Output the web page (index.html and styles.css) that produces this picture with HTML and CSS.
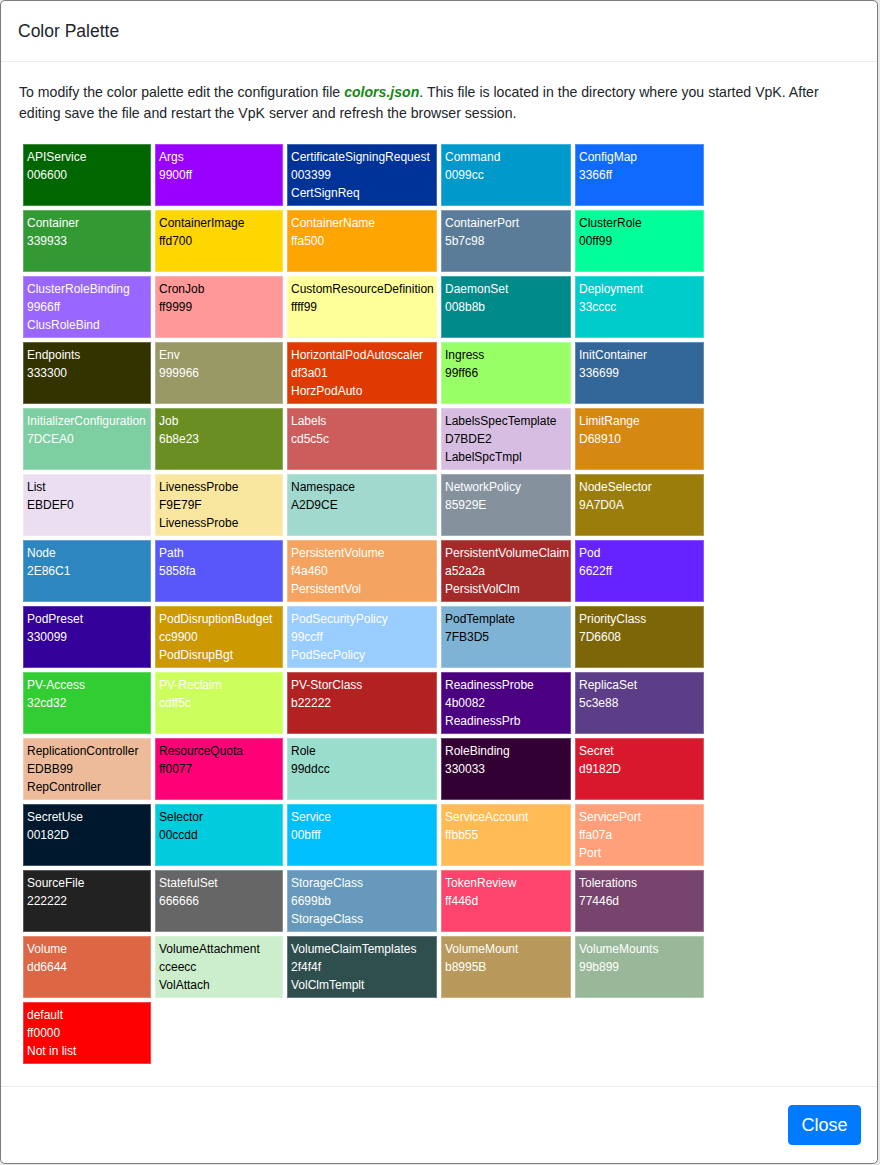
FILE: index.html
```html
<!DOCTYPE html>
<html lang="en">
<head>
<meta charset="utf-8">
<title>Color Palette</title>
<link rel="stylesheet" href="styles.css">
</head>
<body>
<div class="modal">
  <div class="modal-header">
    <h5 class="modal-title">Color Palette</h5>
  </div>
  <div class="modal-body">
    <p class="intro">To modify the color palette edit the configuration file <b class="file">colors.json</b>. This file is located in the directory where you started VpK. After editing save the file and restart the VpK server and refresh the browser session.</p>
    <div class="palette">
      <div class="cell light" style="background:#006600">APIService<br>006600</div>
      <div class="cell light" style="background:#9900ff">Args<br>9900ff</div>
      <div class="cell light" style="background:#003399">CertificateSigningRequest<br>003399<br>CertSignReq</div>
      <div class="cell light" style="background:#0099cc">Command<br>0099cc</div>
      <div class="cell light" style="background:#0f6bff">ConfigMap<br>3366ff</div>

      <div class="cell light" style="background:#339933">Container<br>339933</div>
      <div class="cell dark" style="background:#ffd700">ContainerImage<br>ffd700</div>
      <div class="cell light" style="background:#ffa500">ContainerName<br>ffa500</div>
      <div class="cell light" style="background:#5b7c98">ContainerPort<br>5b7c98</div>
      <div class="cell dark" style="background:#00ff99">ClusterRole<br>00ff99</div>

      <div class="cell light" style="background:#9966ff">ClusterRoleBinding<br>9966ff<br>ClusRoleBind</div>
      <div class="cell dark" style="background:#ff9999">CronJob<br>ff9999</div>
      <div class="cell dark" style="background:#ffff99">CustomResourceDefinition<br>ffff99</div>
      <div class="cell light" style="background:#008b8b">DaemonSet<br>008b8b</div>
      <div class="cell light" style="background:#00cccc">Deployment<br>33cccc</div>

      <div class="cell light" style="background:#333300">Endpoints<br>333300</div>
      <div class="cell light" style="background:#999966">Env<br>999966</div>
      <div class="cell light" style="background:#df3a01">HorizontalPodAutoscaler<br>df3a01<br>HorzPodAuto</div>
      <div class="cell dark" style="background:#99ff66">Ingress<br>99ff66</div>
      <div class="cell light" style="background:#336699">InitContainer<br>336699</div>

      <div class="cell light" style="background:#7dcea0">InitializerConfiguration<br>7DCEA0</div>
      <div class="cell light" style="background:#6b8e23">Job<br>6b8e23</div>
      <div class="cell light" style="background:#cd5c5c">Labels<br>cd5c5c</div>
      <div class="cell dark" style="background:#d7bde2">LabelsSpecTemplate<br>D7BDE2<br>LabelSpcTmpl</div>
      <div class="cell light" style="background:#d68910">LimitRange<br>D68910</div>

      <div class="cell dark" style="background:#ebdef0">List<br>EBDEF0</div>
      <div class="cell dark" style="background:#f9e79f">LivenessProbe<br>F9E79F<br>LivenessProbe</div>
      <div class="cell dark" style="background:#a2d9ce">Namespace<br>A2D9CE</div>
      <div class="cell light" style="background:#85929e">NetworkPolicy<br>85929E</div>
      <div class="cell light" style="background:#9a7d0a">NodeSelector<br>9A7D0A</div>

      <div class="cell light" style="background:#2e86c1">Node<br>2E86C1</div>
      <div class="cell light" style="background:#5858fa">Path<br>5858fa</div>
      <div class="cell light" style="background:#f4a460">PersistentVolume<br>f4a460<br>PersistentVol</div>
      <div class="cell light" style="background:#a52a2a">PersistentVolumeClaim<br>a52a2a<br>PersistVolClm</div>
      <div class="cell light" style="background:#6622ff">Pod<br>6622ff</div>

      <div class="cell light" style="background:#330099">PodPreset<br>330099</div>
      <div class="cell light" style="background:#cc9900">PodDisruptionBudget<br>cc9900<br>PodDisrupBgt</div>
      <div class="cell light" style="background:#99ccff">PodSecurityPolicy<br>99ccff<br>PodSecPolicy</div>
      <div class="cell dark" style="background:#7fb3d5">PodTemplate<br>7FB3D5</div>
      <div class="cell light" style="background:#7d6608">PriorityClass<br>7D6608</div>

      <div class="cell light" style="background:#32cd32">PV-Access<br>32cd32</div>
      <div class="cell light" style="background:#cdff5c">PV-Reclaim<br>cdff5c</div>
      <div class="cell light" style="background:#b22222">PV-StorClass<br>b22222</div>
      <div class="cell light" style="background:#4b0082">ReadinessProbe<br>4b0082<br>ReadinessPrb</div>
      <div class="cell light" style="background:#5c3e88">ReplicaSet<br>5c3e88</div>

      <div class="cell dark" style="background:#edbb99">ReplicationController<br>EDBB99<br>RepController</div>
      <div class="cell dark" style="background:#ff0077">ResourceQuota<br>ff0077</div>
      <div class="cell dark" style="background:#99ddcc">Role<br>99ddcc</div>
      <div class="cell light" style="background:#330033">RoleBinding<br>330033</div>
      <div class="cell light" style="background:#d9182d">Secret<br>d9182D</div>

      <div class="cell light" style="background:#00182d">SecretUse<br>00182D</div>
      <div class="cell dark" style="background:#00ccdd">Selector<br>00ccdd</div>
      <div class="cell light" style="background:#00bfff">Service<br>00bfff</div>
      <div class="cell light" style="background:#ffbb55">ServiceAccount<br>ffbb55</div>
      <div class="cell light" style="background:#ffa07a">ServicePort<br>ffa07a<br>Port</div>

      <div class="cell light" style="background:#222222">SourceFile<br>222222</div>
      <div class="cell light" style="background:#666666">StatefulSet<br>666666</div>
      <div class="cell light" style="background:#6699bb">StorageClass<br>6699bb<br>StorageClass</div>
      <div class="cell light" style="background:#ff446d">TokenReview<br>ff446d</div>
      <div class="cell light" style="background:#77446d">Tolerations<br>77446d</div>

      <div class="cell light" style="background:#dd6644">Volume<br>dd6644</div>
      <div class="cell dark" style="background:#cceecc">VolumeAttachment<br>cceecc<br>VolAttach</div>
      <div class="cell light" style="background:#2f4f4f">VolumeClaimTemplates<br>2f4f4f<br>VolClmTemplt</div>
      <div class="cell light" style="background:#b8995b">VolumeMount<br>b8995B</div>
      <div class="cell light" style="background:#99b899">VolumeMounts<br>99b899</div>

      <div class="cell light" style="background:#ff0000">default<br>ff0000<br>Not in list</div>
    </div>
  </div>
  <div class="modal-footer">
    <button class="btn-close" type="button">Close</button>
  </div>
</div>
</body>
</html>
```

FILE: styles.css
```css
* {
  box-sizing: border-box;
}

html, body {
  margin: 0;
  padding: 0;
}

body {
  background: #e6e6e6;
  font-family: "Liberation Sans", Arial, Helvetica, sans-serif;
  color: #212529;
  width: 880px;
  height: 1165px;
}

.modal {
  width: 878px;
  height: 1164px;
  background: #ffffff;
  border: 1px solid #7c7c7c;
  border-radius: 5px;
  display: flex;
  flex-direction: column;
  overflow: hidden;
}

.modal-header {
  padding: 16px 17px;
  border-bottom: 1px solid #e9ecef;
}

.modal-title {
  margin: 0;
  font-size: 17.5px;
  line-height: 28px;
  font-weight: 400;
  color: #212529;
}

.modal-body {
  padding: 20px 18px 18px 18px;
  flex: 1;
}

.intro {
  margin: 0 0 16px 0;
  font-size: 14.1px;
  line-height: 21px;
}

.file {
  color: #148a14;
  font-weight: bold;
  font-style: italic;
}

.palette {
  display: grid;
  grid-template-columns: 128px 128px 150px 130px 129px;
  grid-auto-rows: 62px;
  gap: 4px;
  padding: 4px;
}

.cell {
  border: 1px solid rgba(255, 255, 255, 0.25);
  padding: 3px;
  font-size: 12px;
  line-height: 18px;
  white-space: nowrap;
  overflow: hidden;
}

.cell.light {
  color: #ffffff;
}

.cell.dark {
  color: #000000;
}

.modal-footer {
  border-top: 1px solid #e9ecef;
  padding: 18px 16px;
  display: flex;
  justify-content: flex-end;
}

.btn-close {
  font-family: "Liberation Sans", Arial, Helvetica, sans-serif;
  font-size: 18px;
  line-height: 24px;
  padding: 7px 12.5px;
  color: #ffffff;
  background: #007bff;
  border: 1px solid #007bff;
  border-radius: 4px;
  cursor: pointer;
}
```
